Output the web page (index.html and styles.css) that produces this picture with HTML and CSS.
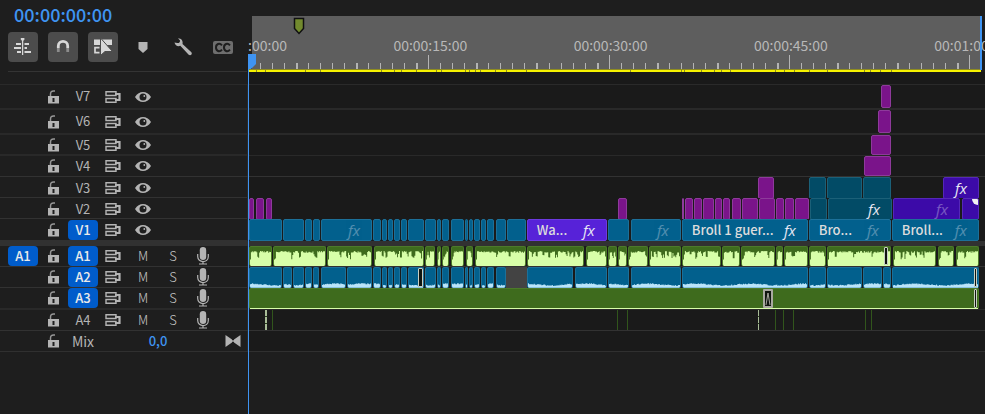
FILE: index.html
```html
<!DOCTYPE html>
<html lang="en">
<head>
<meta charset="utf-8">
<title>Timeline</title>
<link rel="stylesheet" href="styles.css">
</head>
<body>
<svg class="sprite" aria-hidden="true">
  <symbol id="i-lock" viewBox="0 0 12 14"><path d="M1 6h11v7.500H1z" fill="currentColor"/><path d="M3.500 6.500V4.200C3.500 1.800 4.500 1 6.500 1h1.500" fill="none" stroke="currentColor" stroke-width="1.500" opacity=".8"/><path d="M5.500 8h2v4h-2z" fill="#1e1e1e"/></symbol>
  <symbol id="i-sync" viewBox="0 0 16 12"><path d="M1 .8h10v3.700H1zM1 7.500h10v3.700H1z" fill="none" stroke="currentColor" stroke-width="1.400"/><path d="M10 3h4.500v6H10" fill="none" stroke="currentColor" stroke-width="2.200"/></symbol>
  <symbol id="i-eye" viewBox="0 0 16 12"><path d="M0 6C4-.6 12-.6 16 6 12 12.600 4 12.600 0 6z" fill="currentColor"/><circle cx="8" cy="6" r="3.500" fill="#1e1e1e"/><circle cx="9.300" cy="5" r=".9" fill="currentColor"/></symbol>
  <symbol id="i-mic" viewBox="0 0 12 18"><rect x="2.800" y="0" width="6.400" height="13" rx="3.200" fill="currentColor"/><path d="M.7 7v2.500c0 6.700 10.600 6.700 10.600 0V7M6 14v3M2 17h8" fill="none" stroke="currentColor" stroke-width="1.200"/></symbol>
  <symbol id="i-bow" viewBox="0 0 16 14"><path d="M.5 1 7 5.500v3L.5 13zM15.500 1 9 5.500v3l6.500 4.500z" fill="currentColor"/><path d="M6 7h4" stroke="currentColor" stroke-width="1.500"/></symbol>
</svg>
<main class="panel">
  <header class="top">
    <div class="tools">
      <output class="timecode">00:00:00:00</output>
      <div class="toolbar">
        <button class="tool tool-on" aria-label="Insert as nests"><svg width="20" height="20" viewBox="0 0 20 20"><path d="M9.600 1v17" stroke="currentColor" stroke-width="1.300"/><path d="M7.800 1h3.600v1.800l-1.800 1.500-1.800-1.500z" fill="currentColor"/><path d="M3 7h5M11.500 7H16M1 11h7M11.500 11H14M4 15h4M11.500 15H18" stroke="currentColor" stroke-width="2"/></svg></button>
        <button class="tool tool-on" aria-label="Snap"><svg width="20" height="20" viewBox="0 0 20 20"><path d="M5.300 11V9c0-6.200 9.400-6.200 9.400 0v2" fill="none" stroke="currentColor" stroke-width="2.800"/><path d="M5.300 11v4M14.700 11v4" stroke="#8c8c8c" stroke-width="2.800"/></svg></button>
        <button class="tool tool-on" aria-label="Linked selection"><svg width="20" height="20" viewBox="0 0 20 20"><path d="M1 2.500h6.500V8H1zM9 2.500h10V8H9z" fill="currentColor"/><path d="M6.500 10.700H2v5h4.500" fill="none" stroke="currentColor" stroke-width="1.700"/><path d="M7.500 1v17.500l4.500-4h7.500z" fill="currentColor" stroke="#4c4c4c" stroke-width="1"/></svg></button>
        <button class="tool" aria-label="Add marker"><svg width="20" height="20" viewBox="0 0 20 20"><path d="M5.500 5h9v7L10 16l-4.500-4z" fill="currentColor"/></svg></button>
        <button class="tool" aria-label="Timeline settings"><svg width="20" height="20" viewBox="0 0 20 20"><path d="M1.500 5.500c.6 3.200 3.500 4.300 5.800 3.300l8.400 9c2 1.400 4-.8 2.700-2.600L9.500 7C10.300 4 8.500 1.300 5 1.200l2 2.300c.3 1.800-1 2.800-2.700 2.500z" fill="currentColor"/></svg></button>
        <button class="tool cc" aria-label="Captions"><svg width="20" height="13" viewBox="0 0 20 13"><rect width="20" height="13" rx="2" fill="currentColor"/><path d="M9 4.400C6.500 1.500 3 3 3 6.500s3.500 5 6 2.100M17 4.400c-2.500-2.900-6-1.400-6 2.100s3.500 5 6 2.100" fill="none" stroke="#1e1e1e" stroke-width="2"/></svg></button>
      </div>
    </div>
    <div class="ruler">
      <div class="ruler-face"></div>
      <svg class="scale" id="scale" width="100%" height="56"></svg>
    </div>
  </header>
  <div id="tracks"></div>
  <div class="playhead"><svg width="9" height="16" viewBox="0 0 9 16"><path d="M0 0h7v10l-5 5H0z" fill="#3f94f2"/></svg></div>
</main>
<script src="timeline.js"></script>
</body>
</html>
```
FILE: styles.css
```css
* { box-sizing: border-box; }

:root {
  --head: 248px;
  --icon: #b4b4b4;
  --blue: #3f94f2;
}

body {
  margin: 0;
  background: #1e1e1e;
  color: var(--icon);
  font: 14px/20px "Noto Sans CJK SC", "Noto Sans", sans-serif;
}

button {
  display: flex;
  align-items: center;
  justify-content: center;
  margin: 0;
  padding: 0;
  border: 0;
  background: none;
  color: inherit;
  font: inherit;
}

svg { display: block; flex: none; }
.sprite { position: absolute; width: 0; height: 0; }

.panel { position: relative; min-height: 100vh; overflow: hidden; }

.top { display: grid; grid-template-columns: var(--head) 1fr; height: 84px; }
.tools { padding: 4px 1px 0 8px; }
.timecode {
  display: block;
  height: 28px;
  padding-left: 6px;
  color: var(--blue);
  font-size: 18px;
  font-weight: 500;
  line-height: 20px;
}
.toolbar { display: flex; gap: 10px; height: 40px; border-bottom: 1px solid #343434; }
.tool { width: 30px; height: 30px; border-radius: 4px; }
.tool-on { background: #4c4c4c; color: #d8d8d8; }
.cc { color: #6e6e6e; }

.ruler { padding-top: 16px; background: linear-gradient(#1e1e1e 72px, #191919 72px); overflow: hidden; display: grid; }
.ruler-face { grid-area: 1 / 1; height: 54px; margin: 0 4px; background: #5e5e5e; }
.scale { grid-area: 1 / 1; }
.scale text { fill: #b8b8b8; font-size: 14px; text-anchor: middle; }
.tick { fill: #b4b4b4; }
.work { fill: #f6f200; }
.work-edge { fill: #8f8c20; }
.work-end { fill: var(--blue); }

.track {
  display: grid;
  grid-template-columns: var(--head) 1fr;
  height: 21px;
  border-top: 1px solid #323232;
}
.track-tall { height: 25px; border-top-color: #2a2a2a; }
.track-thick { border-top: 2px solid #292929; }
.track-v7 { height: 24px; }
.track-v1 { height: 22px; }
.track-a1 { height: 26px; border-top: 6px solid #313131; }
.track-a4 { height: 22px; }
.track-mix { border-bottom: 1px solid #303030; height: 22px; }

.heads {
  display: grid;
  grid-template-columns: repeat(8, 30px);
  padding-left: 8px;
  align-items: center;
  justify-items: center;
  border-right: 1px solid #292929;
}
.heads > * { grid-row: 1; height: 20px; width: 30px; }
.badge { border-radius: 4px; font-size: 13px; line-height: 18px; padding-bottom: 1px; }
.badge-on { background: #005ccb; color: #eaeaea; font-weight: 500; }
.col-1 { grid-column: 1; }
.col-2 { grid-column: 2; }
.col-3 { grid-column: 3; }
.col-4 { grid-column: 4; }
.col-5 { grid-column: 5; }
.col-6 { grid-column: 6; }
.col-7 { grid-column: 7; }
.col-8 { grid-column: 8; }
.letter { color: #c8c8c8; font-size: 13px; font-weight: 300; }
.level { grid-column: 5 / 7; color: var(--blue); font-size: 13px; font-weight: 500; }

.lane { display: flex; min-width: 0; background: #1a1a1a; }
.clip {
  display: flex;
  align-items: center;
  flex: none;
  min-width: 1px;
  overflow: hidden;
  border: 1px solid;
  border-radius: 2px;
  color: #dcdcdc;
}
.clip-name { padding-left: 9px; white-space: nowrap; font-size: 13px; font-weight: 500; }
.fx {
  margin-left: auto;
  padding-right: 11px;
  color: #e8e8f4;
  font: italic 15px/20px "Open Sans", sans-serif;
}
.fx-dim { opacity: .35; }
.magenta { background: #7a148a; border-color: #8e3a9b; }
.blue { background: #02608d; border-color: #1c7099; }
.teal { background: #024b66; border-color: #1b6078; }
.violet { background: #5722d8; border-color: #6d3ae0; }
.indigo { background: #3c0aa8; border-color: #5527b8; }
.green { background: #3e6b1d; border-color: #4c7a2a; }
.gap { background: #434343; border-color: #434343; border-radius: 0; }
.wave { border-bottom: 0; }
.wave svg { width: 100%; height: 100%; }
.line { border: 0; border-radius: 0; background: #31551c; }
.line-key { border: 0; border-radius: 0; background: repeating-linear-gradient(#a9bd98 0 6px, #29401c 6px 7px); }
.corner::after {
  content: "";
  width: 6px;
  height: 6px;
  margin: 0 0 auto auto;
  background: #f2f2f2;
  border-bottom-left-radius: 6px;
}
.has-fade { position: relative; overflow: visible; }
.fade {
  position: absolute;
  top: 0;
  bottom: 1px;
  border: 1px solid #c8d0c4;
  background: #101510;
  border-radius: 1px;
}
.fade-wide {
  display: flex;
  border: 2px solid #a9a9a0;
  background: #101510;
}

.playhead {
  position: absolute;
  top: 54px;
  bottom: 0;
  left: var(--head);
  border-left: 1px solid var(--blue);
}
```
FILE: timeline.js
```js
// Clip positions are [start, end, options] in timeline units; the view shows VIEW units from START.
const START = 248, VIEW = 737;
const pct = n => (n / VIEW * 100).toFixed(4) + '%';
const at = n => pct(n - START);

let seed = 7;
const rand = () => (seed = (seed * 16807) % 2147483647) / 2147483647;

const icon = (name, w, h) => `<svg width="${w}" height="${h}"><use href="#i-${name}"/></svg>`;

// Ruler
const majors = { 0: '00:00:00:00', 15: '00:00:15:00', 30: '00:00:30:00', 45: '00:00:45:00', 60: '00:01:00:00' };
let scale = '';
for (let s = 1; s <= 60; s++) {
  const x = Math.round(248 + s * 12.02);
  const major = s % 15 === 0;
  const wide = !major && (s % 15 === 4 || s % 15 === 9 || s % 15 === 14);
  scale += `<rect class="tick" x="${at(x)}" y="${major ? 39 : 47}" width="${wide ? 2 : 1}" height="${major ? 14 : 6}"/>`;
}
for (const s in majors) scale += `<text x="${at(250 + s * 12.02)}" y="35">${majors[s]}</text>`;
scale += `<rect class="work-edge" x="0" y="53" width="${at(981)}" height="1"/><rect class="work" x="0" y="54" width="${at(981)}" height="2"/>`;
[256, 265, 305, 320, 381, 394, 401, 416, 436, 441, 465, 469, 475, 480, 495, 506, 526, 630, 681, 684, 701, 714, 721, 730, 775, 784, 794, 809, 827, 864, 870, 880, 891]
  .forEach(x => scale += `<rect class="work-edge" x="${at(x)}" y="54" width="1" height="2"/>`);
scale += `<rect class="work-end" x="${at(980)}" y="0" width="2" height="54"/>`;
scale += `<path d="M46.500 2.500h9v10l-4.500 5-4.500-5z" fill="#728a2e" stroke="#101010" stroke-width="1.500"/>`;
document.getElementById('scale').innerHTML = scale;

// Waveforms
function wave(width, kind) {
  let d = 'M0 20', h = 0, dip = 0;
  for (let x = 0; x < width; x++) {
    if (kind === 'voice') {
      h = 14 + rand() * 2;
      if (rand() < .12) dip = 2;
      if (dip-- > 0) h -= 2 + rand() * 5;
      if (x < 1) h = 7;
    } else if (kind === 'low') {
      h = 2.6 + Math.sin(x / 9 + width) * .9 + rand() * 1.2;
    } else {
      h = 1;
    }
    d += `V${(20 - h).toFixed(1)}H${x + 1}`;
  }
  const fill = kind === 'low' ? '#b9e4fa' : '#d8ffa9';
  return `<svg viewBox="0 0 ${width} 20" preserveAspectRatio="none"><path d="${d}V20z" fill="${fill}"/></svg>`;
}

function fade([x, w], a, b) {
  const left = ((x - a) / (b - a) * 100).toFixed(3);
  const wide = w > 8;
  return `<i class="fade${wide ? ' fade-wide' : ''}" style="left:${left}%;width:${w}px">`
    + (wide ? '<svg width="6" height="15" viewBox="0 0 6 15"><path d="M1 14 3 2l2 12" fill="none" stroke="#a9a9a0"/></svg>' : '') + '</i>';
}

function lane(clips, base, kind) {
  let pos = START, html = '';
  for (const [a, b, o = {}] of clips) {
    const cls = o.c || base;
    const audio = kind && !o.c;
    const fades = (o.fades || []).map(f => fade(f, a, b)).join('');
    html += `<div class="clip ${cls}${audio ? ' wave' : ''}${fades ? ' has-fade' : ''}" style="margin-left:${pct(a - pos)};width:${pct(b - a)}">`
      + (o.t ? `<span class="clip-name">${o.t}</span>` : '')
      + (o.fx ? `<span class="fx${o.fx === 'dim' ? ' fx-dim' : ''}">fx</span>` : '')
      + (audio ? wave(Math.round(b - a), kind) : '') + fades + '</div>';
    pos = b;
  }
  return html;
}

const shortCuts = [[373, 381], [382, 387], [388, 393], [394, 400], [401, 407]];
const midCuts = [[425, 436], [437, 441], [442, 449], [451, 464], [465, 468], [469, 473], [474, 480], [481, 486], [487, 494], [496, 506]];
const T = { c: 'teal' };

const tracks = [
  { id: 'V7', cls: 'track-v7 track-tall', base: 'magenta', clips: [[881, 891]] },
  { id: 'V6', cls: 'track-tall track-thick', base: 'magenta', clips: [[878, 891]] },
  { id: 'V5', cls: 'track-thick', base: 'magenta', clips: [[871, 891]] },
  { id: 'V4', cls: 'track-thick track-a4', base: 'magenta', clips: [[864, 891]] },
  { id: 'V3', base: 'magenta', clips: [[758, 774], [809, 826, T], [827, 862, T], [863, 891, T], [943, 979, { c: 'indigo', fx: 'on' }]] },
  { id: 'V2', base: 'magenta', clips: [[249, 254], [256, 264], [266, 272], [618, 627], [682, 683], [684, 692], [693, 701], [702, 713], [714, 721], [722, 729], [731, 740], [741, 757], [758, 774], [775, 783], [784, 793], [794, 808], [809, 826, T], [827, 891, { c: 'teal', fx: 'on' }], [892, 959, { c: 'indigo', fx: 'dim' }], [961, 978, { c: 'indigo corner' }]] },
  { id: 'V1', cls: 'track-v1', on: 1, base: 'blue', clips: [[249, 282], [283, 304], [305, 312], [313, 320], [321, 372, { fx: 'dim' }], ...shortCuts, [408, 424], ...midCuts, [507, 526], [527, 607, { c: 'violet', t: 'Wa...', fx: 'on' }], [608, 629], [631, 681, { fx: 'dim' }], [682, 808, { t: 'Broll 1 guer...', fx: 'on' }], [809, 891, { t: 'Bro...', fx: 'dim' }], [892, 979, { t: 'Broll...', fx: 'dim' }]] },
  { id: 'A1', cls: 'track-a1', on: 1, src: 1, base: 'green', kind: 'voice', clips: [[249, 272], [273, 326], [327, 372], [374, 424], [425, 435], [437, 441], [442, 449], [451, 464], [466, 473], [475, 526], [527, 584], [586, 607], [608, 617], [618, 627], [628, 648], [649, 681], [682, 721], [722, 740], [741, 775], [776, 783], [784, 808], [809, 826], [827, 891, { fades: [[885, 4]] }], [893, 936], [938, 954], [956, 979]] },
  { id: 'A2', on: 1, base: 'blue', kind: 'low', clips: [[249, 282], [283, 292], [293, 304], [305, 312], [313, 319], [321, 346], [347, 372], ...shortCuts, [408, 424, { fades: [[418, 5]] }], ...midCuts, [506, 527, { c: 'gap' }], [527, 573], [575, 607], [608, 629], [631, 681], [682, 808], [809, 826], [827, 862], [863, 882], [883, 891], [892, 979, { fades: [[975, 3]] }]] },
  { id: 'A3', on: 1, base: 'green', kind: 'flat', clips: [[249, 979, { fades: [[763, 10], [975, 3]] }]] },
  { id: 'A4', cls: 'track-thick track-a4', base: 'line', clips: [[265, 267, { c: 'line-key' }], [272, 273], [617, 618], [627, 628], [758, 759, { c: 'line-key' }], [775, 776], [783, 784], [793, 794], [865, 866], [871, 872]] },
];

const row = (cls, heads, clips) => `<section class="track ${cls || ''}"><div class="heads">${heads}</div><div class="lane">${clips}</div></section>`;
const btn = (cls, label, body) => `<button class="${cls}" aria-label="${label}">${body}</button>`;

document.getElementById('tracks').innerHTML = tracks.map(t => {
  const audio = t.id[0] === 'A';
  const heads = (t.src ? btn('badge badge-on col-1', 'Source ' + t.id, t.id) : '')
    + btn('col-2', 'Lock ' + t.id, icon('lock', 12, 14))
    + btn('badge col-3' + (t.on ? ' badge-on' : ''), 'Target ' + t.id, t.id)
    + btn('col-4', 'Sync lock ' + t.id, icon('sync', 16, 12))
    + (audio
      ? btn('letter col-5', 'Mute ' + t.id, 'M') + btn('letter col-6', 'Solo ' + t.id, 'S') + btn('col-7', 'Record ' + t.id, icon('mic', 12, 18))
      : btn('col-5', 'Show ' + t.id, icon('eye', 16, 12)));
  return row(t.cls, heads, lane(t.clips, t.base, t.kind));
}).join('') + row('track-mix',
  btn('col-2', 'Lock mix', icon('lock', 12, 14)) + btn('col-3', 'Mix track', 'Mix')
  + btn('level', 'Mix level', '0,0') + btn('col-8', 'Show keyframes', icon('bow', 16, 14)), '');
```
